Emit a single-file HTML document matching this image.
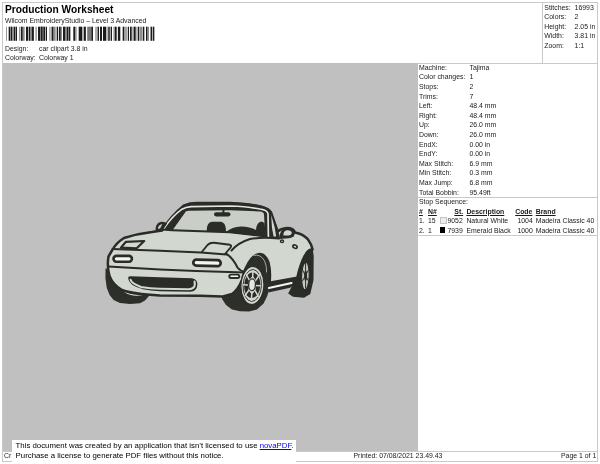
<!DOCTYPE html>
<html><head><meta charset="utf-8">
<style>
html,body{margin:0;padding:0;background:#fff;}
body{width:600px;height:464px;position:relative;overflow:hidden;font-family:"Liberation Sans",sans-serif;font-size:6.9px;color:#1a1a1a;}
.t{position:absolute;white-space:nowrap;line-height:9px;}
.ln{position:absolute;background:#c9c9c9;}
.b{font-weight:bold;}
.u{text-decoration:underline;}
</style></head><body><div id="page" style="position:absolute;left:0;top:0;width:600px;height:464px;will-change:transform">
<!-- frame lines -->
<div class="ln" style="left:2px;top:2px;width:596px;height:1px"></div>
<div class="ln" style="left:2px;top:2px;width:1px;height:460px"></div>
<div class="ln" style="left:597px;top:2px;width:1px;height:460px"></div>
<div class="ln" style="left:2px;top:461px;width:596px;height:1px"></div>
<div class="ln" style="left:542.3px;top:2px;width:1px;height:61px"></div>
<div class="ln" style="left:417px;top:62.5px;width:181px;height:1px"></div>
<div class="ln" style="left:417px;top:197px;width:181px;height:1px"></div>
<div class="ln" style="left:417px;top:235.4px;width:181px;height:1px"></div>
<div class="ln" style="left:2px;top:450.9px;width:596px;height:1px"></div>
<!-- gray area -->
<div id="gray" style="position:absolute;left:3px;top:63px;width:414.5px;height:388px;background:#c0c0c0"></div>

<div class="t b" id="title" style="left:5px;top:4px;font-size:10.2px;line-height:12px;color:#000">Production Worksheet</div>
<div class="t" style="left:5px;top:15.61px">Wilcom EmbroideryStudio – Level 3 Advanced</div>
<div class="t" style="left:5px;top:43.61px">Design:</div>
<div class="t" style="left:39px;top:43.61px">car clipart 3.8 in</div>
<div class="t" style="left:5px;top:52.61px">Colorway:</div>
<div class="t" style="left:39px;top:52.61px">Colorway 1</div>
<div class="t" style="left:544.3px;top:2.61px">Stitches:</div>
<div class="t" style="left:574.6px;top:2.61px">16993</div>
<div class="t" style="left:544.3px;top:11.61px">Colors:</div>
<div class="t" style="left:574.6px;top:11.61px">2</div>
<div class="t" style="left:544.3px;top:21.61px">Height:</div>
<div class="t" style="left:574.6px;top:21.61px">2.05 in</div>
<div class="t" style="left:544.3px;top:30.61px">Width:</div>
<div class="t" style="left:574.6px;top:30.61px">3.81 in</div>
<div class="t" style="left:544.3px;top:40.61px">Zoom:</div>
<div class="t" style="left:574.6px;top:40.61px">1:1</div>
<div class="t" style="left:419px;top:62.61px">Machine:</div>
<div class="t" style="left:469.5px;top:62.61px">Tajima</div>
<div class="t" style="left:419px;top:71.61px">Color changes:</div>
<div class="t" style="left:469.5px;top:71.61px">1</div>
<div class="t" style="left:419px;top:81.61px">Stops:</div>
<div class="t" style="left:469.5px;top:81.61px">2</div>
<div class="t" style="left:419px;top:91.61px">Trims:</div>
<div class="t" style="left:469.5px;top:91.61px">7</div>
<div class="t" style="left:419px;top:100.61px">Left:</div>
<div class="t" style="left:469.5px;top:100.61px">48.4 mm</div>
<div class="t" style="left:419px;top:110.61px">Right:</div>
<div class="t" style="left:469.5px;top:110.61px">48.4 mm</div>
<div class="t" style="left:419px;top:119.61px">Up:</div>
<div class="t" style="left:469.5px;top:119.61px">26.0 mm</div>
<div class="t" style="left:419px;top:129.61px">Down:</div>
<div class="t" style="left:469.5px;top:129.61px">26.0 mm</div>
<div class="t" style="left:419px;top:139.61px">EndX:</div>
<div class="t" style="left:469.5px;top:139.61px">0.00 in</div>
<div class="t" style="left:419px;top:148.61px">EndY:</div>
<div class="t" style="left:469.5px;top:148.61px">0.00 in</div>
<div class="t" style="left:419px;top:158.61px">Max Stitch:</div>
<div class="t" style="left:469.5px;top:158.61px">6.9 mm</div>
<div class="t" style="left:419px;top:167.61px">Min Stitch:</div>
<div class="t" style="left:469.5px;top:167.61px">0.3 mm</div>
<div class="t" style="left:419px;top:177.61px">Max Jump:</div>
<div class="t" style="left:469.5px;top:177.61px">6.8 mm</div>
<div class="t" style="left:419px;top:187.61px">Total Bobbin:</div>
<div class="t" style="left:469.5px;top:187.61px">95.49ft</div>
<div class="t" style="left:419px;top:196.61px">Stop Sequence:</div>
<div class="t b u" style="left:419px;top:206.61px">#</div>
<div class="t b u" style="left:428px;top:206.61px">N#</div>
<div class="t b u" style="left:454.3px;top:206.61px">St.</div>
<div class="t b u" style="left:466.4px;top:206.61px">Description</div>
<div class="t b u" style="left:515.2px;top:206.61px">Code</div>
<div class="t b u" style="left:535.7px;top:206.61px">Brand</div>
<div class="t" style="left:419px;top:215.61px">1.</div>
<div class="t" style="left:428px;top:215.61px">15</div>
<div class="t" style="left:447.4px;top:215.61px">9052</div>
<div class="t" style="left:466.4px;top:215.61px">Natural White</div>
<div class="t" style="left:517.4px;top:215.61px">1004</div>
<div class="t" style="left:535.7px;top:215.61px">Madeira Classic 40</div>
<div style="position:absolute;left:439.5px;top:216.9px;width:5px;height:5px;background:#ededed;border:0.5px solid #c4c4c4"></div>
<div class="t" style="left:419px;top:225.61px">2.</div>
<div class="t" style="left:428px;top:225.61px">1</div>
<div class="t" style="left:447.4px;top:225.61px">7939</div>
<div class="t" style="left:466.4px;top:225.61px">Emerald Black</div>
<div class="t" style="left:517.4px;top:225.61px">1000</div>
<div class="t" style="left:535.7px;top:225.61px">Madeira Classic 40</div>
<div style="position:absolute;left:439.5px;top:226.9px;width:5.8px;height:5.8px;background:#000"></div>
<div class="t" style="left:4px;top:450.61px">Cr</div>
<div class="t" style="left:353.5px;top:450.61px">Printed: 07/08/2021 23.49.43</div>
<div class="t" style="left:561px;top:450.61px">Page 1 of 1</div>
<div id="notice" style="position:absolute;left:11.7px;top:440px;width:284.1px;height:22.5px;background:#fff"></div>
<div class="t" style="left:15.6px;top:441px;font-size:7.82px;line-height:10px;color:#000">This document was created by an application that isn’t licensed to use <span style="color:#0000ee;text-decoration:underline">novaPDF</span>.</div>
<div class="t" style="left:15.6px;top:450.5px;font-size:7.82px;line-height:10px;color:#000">Purchase a license to generate PDF files without this notice.</div>
<svg width="600" height="50" viewBox="0 0 600 50" style="position:absolute;left:0;top:0" fill="#1c1c1c"><rect x="6.00" y="26.7" width="1.00" height="14.1" fill-opacity="0.45"/><rect x="8.67" y="26.7" width="1.67" height="14.1" fill-opacity="1"/><rect x="10.33" y="26.7" width="0.67" height="14.1" fill-opacity="0.4"/><rect x="11.00" y="26.7" width="1.33" height="14.1" fill-opacity="1"/><rect x="12.33" y="26.7" width="1.33" height="14.1" fill-opacity="0.35"/><rect x="13.67" y="26.7" width="1.33" height="14.1" fill-opacity="1"/><rect x="15.00" y="26.7" width="0.67" height="14.1" fill-opacity="0.4"/><rect x="15.67" y="26.7" width="1.33" height="14.1" fill-opacity="1"/><rect x="19.00" y="26.7" width="1.00" height="14.1" fill-opacity="0.45"/><rect x="20.80" y="26.7" width="1.87" height="14.1" fill-opacity="1"/><rect x="22.67" y="26.7" width="2.00" height="14.1" fill-opacity="0.5"/><rect x="26.00" y="26.7" width="2.00" height="14.1" fill-opacity="1"/><rect x="28.00" y="26.7" width="0.80" height="14.1" fill-opacity="0.25"/><rect x="28.80" y="26.7" width="1.33" height="14.1" fill-opacity="1"/><rect x="30.13" y="26.7" width="1.53" height="14.1" fill-opacity="0.5"/><rect x="31.67" y="26.7" width="2.20" height="14.1" fill-opacity="1"/><rect x="35.33" y="26.7" width="1.67" height="14.1" fill-opacity="0.4"/><rect x="38.00" y="26.7" width="2.33" height="14.1" fill-opacity="1"/><rect x="41.00" y="26.7" width="1.33" height="14.1" fill-opacity="1"/><rect x="42.33" y="26.7" width="1.67" height="14.1" fill-opacity="0.45"/><rect x="40.67" y="26.7" width="1.33" height="14.1" fill-opacity="1"/><rect x="42.00" y="26.7" width="1.67" height="14.1" fill-opacity="0.45"/><rect x="43.67" y="26.7" width="1.33" height="14.1" fill-opacity="1"/><rect x="45.67" y="26.7" width="1.33" height="14.1" fill-opacity="1"/><rect x="49.00" y="26.7" width="1.00" height="14.1" fill-opacity="0.35"/><rect x="50.00" y="26.7" width="1.67" height="14.1" fill-opacity="0.25"/><rect x="51.67" y="26.7" width="1.67" height="14.1" fill-opacity="1"/><rect x="53.33" y="26.7" width="2.33" height="14.1" fill-opacity="0.5"/><rect x="56.67" y="26.7" width="1.47" height="14.1" fill-opacity="1"/><rect x="59.00" y="26.7" width="1.00" height="14.1" fill-opacity="1"/><rect x="60.00" y="26.7" width="1.67" height="14.1" fill-opacity="0.75"/><rect x="63.00" y="26.7" width="2.33" height="14.1" fill-opacity="1"/><rect x="65.33" y="26.7" width="1.33" height="14.1" fill-opacity="0.45"/><rect x="66.67" y="26.7" width="1.67" height="14.1" fill-opacity="1"/><rect x="68.67" y="26.7" width="1.67" height="14.1" fill-opacity="1"/><rect x="73.33" y="26.7" width="1.67" height="14.1" fill-opacity="1"/><rect x="75.00" y="26.7" width="1.67" height="14.1" fill-opacity="0.45"/><rect x="78.67" y="26.7" width="1.33" height="14.1" fill-opacity="1"/><rect x="80.00" y="26.7" width="2.00" height="14.1" fill-opacity="1"/><rect x="82.00" y="26.7" width="2.00" height="14.1" fill-opacity="0.35"/><rect x="84.00" y="26.7" width="1.87" height="14.1" fill-opacity="1"/><rect x="87.20" y="26.7" width="4.13" height="14.1" fill-opacity="0.6"/><rect x="91.33" y="26.7" width="1.67" height="14.1" fill-opacity="1"/><rect x="95.00" y="26.7" width="2.67" height="14.1" fill-opacity="0.35"/><rect x="97.67" y="26.7" width="1.33" height="14.1" fill-opacity="1"/><rect x="100.00" y="26.7" width="2.00" height="14.1" fill-opacity="1"/><rect x="103.00" y="26.7" width="3.00" height="14.1" fill-opacity="1"/><rect x="106.00" y="26.7" width="2.00" height="14.1" fill-opacity="0.3"/><rect x="108.00" y="26.7" width="2.00" height="14.1" fill-opacity="0.75"/><rect x="110.00" y="26.7" width="0.80" height="14.1" fill-opacity="0.3"/><rect x="110.80" y="26.7" width="1.20" height="14.1" fill-opacity="1"/><rect x="113.20" y="26.7" width="1.47" height="14.1" fill-opacity="0.35"/><rect x="114.67" y="26.7" width="2.00" height="14.1" fill-opacity="1"/><rect x="117.87" y="26.7" width="2.13" height="14.1" fill-opacity="1"/><rect x="120.00" y="26.7" width="1.00" height="14.1" fill-opacity="0.3"/><rect x="122.67" y="26.7" width="1.47" height="14.1" fill-opacity="1"/><rect x="124.13" y="26.7" width="3.20" height="14.1" fill-opacity="0.4"/><rect x="127.87" y="26.7" width="1.13" height="14.1" fill-opacity="1"/><rect x="130.00" y="26.7" width="1.67" height="14.1" fill-opacity="1"/><rect x="131.67" y="26.7" width="2.00" height="14.1" fill-opacity="0.3"/><rect x="133.67" y="26.7" width="2.00" height="14.1" fill-opacity="1"/><rect x="135.67" y="26.7" width="2.00" height="14.1" fill-opacity="0.3"/><rect x="137.87" y="26.7" width="1.13" height="14.1" fill-opacity="1"/><rect x="139.33" y="26.7" width="2.67" height="14.1" fill-opacity="0.5"/><rect x="142.67" y="26.7" width="1.67" height="14.1" fill-opacity="1"/><rect x="146.00" y="26.7" width="1.33" height="14.1" fill-opacity="1"/><rect x="147.33" y="26.7" width="1.67" height="14.1" fill-opacity="0.5"/><rect x="150.53" y="26.7" width="1.47" height="14.1" fill-opacity="1"/><rect x="152.67" y="26.7" width="1.67" height="14.1" fill-opacity="1"/></svg>
<svg id="car" width="600" height="464" viewBox="0 0 600 464" style="position:absolute;left:0;top:0">
<g stroke-linejoin="round" stroke-linecap="round">
<!-- left front tire -->
<path d="M105.6,268 L105.4,278 L106.8,288 L109.6,295 L113.6,300 L120,303 L130,303.9 L140,303.3 L145,300.4 L149.4,295.6 L153,293.2 L130,288 Z" fill="#2d2f2b"/>
<path d="M125.2,292 Q131,296 141.8,294.6" fill="none" stroke="#dfe3dc" stroke-width="1.4"/>
<!-- rear wheel tire -->
<path d="M303,249 L312.4,246.5 L313.7,256 L313.5,280 L310.3,294 L304,297.8 L293,296.8 L288.2,293.6 L296,278 Z" fill="#2a2c28"/>
<!-- front right tire -->
<path d="M246,262 L258,251.5 L267,257.5 L270.8,274 L269.6,288 L267.2,296 L263.6,303.6 L257,309.4 L249,311.4 L240,311.2 L232,309.4 L226,305 L222.4,299.5 L221.4,296 L222,293 L240,285 Z" fill="#2d2f2b"/>
<!-- body -->
<path id="body" d="M112,250.5 Q116,243 124,238 Q138,233.6 152,232 L162,230.5
 Q171,216 184,205.6 Q189,203.1 196,203 L230,202.9 Q250,203.8 262,206.9 Q269,208.8 271,212.6 L277.6,231.5
 Q281,228.4 287,228 Q293.5,228 295,232.4 Q303,233.8 308,239.4 Q311.8,244.5 312.6,249.5
 Q308,248.6 304.6,256.2 Q300.4,264.2 297.3,277.8 L269.5,282.8
 Q270.8,272 268.6,263 Q265.4,254 259.5,254 Q252,255 247,266 Q244,271 242,280 Q238,290 232,294 L222,296.6
 L200,295.8 L160,295.4 Q132,294 122,290 Q113,285.2 109.5,276 Q106.8,266 108.5,256.5 Z"
 fill="#d2d7cf" stroke="#2a2c28" stroke-width="2.5"/>
<!-- wheel arch highlight -->
<path d="M254,255.5 Q260.4,253.5 264.6,261 Q267,266 266.6,272" fill="none" stroke="#d2d7cf" stroke-width="0.7"/>
<!-- sill -->
<path d="M269.3,282.5 L297.3,277.5 L296,283.6 L290,287.8 L268.3,292.6 Z" fill="#2a2c28"/>
<path d="M268.8,288 L291.6,283" stroke="#f6f8f4" stroke-width="1.9" fill="none"/>
<!-- windshield frame (dark) -->
<path d="M161.6,230.6 Q171,215.4 183.5,204.8 Q189,202.2 196,202.1 L230,201.9 Q250,202.8 262.5,206 Q270,208 272,212.2 L278.6,231.5 L279.6,238.5 L266.5,237.4 L230,233.3 L172,231.3 Z" fill="#2a2c28"/>
<!-- glass -->
<path d="M173.2,229.2 L186,211.2 Q187,210.8 189,210.8 L230,210.3 L260,211.4 Q263.8,211.6 264,214.6 L265.2,235.6 L230,231.2 Z" fill="#c9cec6"/>
<!-- frame light line -->
<path d="M164.2,228 Q173,215.5 181.4,209.6 Q186,206.9 191,206.6 L230,206 Q248,206.7 260,209 Q267.6,210.2 268,214 L268.4,236.4" fill="none" stroke="#e2e6df" stroke-width="1.7"/>
<!-- quarter window triangle -->
<path d="M271.2,215 L274.6,227 L276.2,236.6 L273.6,236.4 L272,228 Z" fill="#d2d7cf"/>
<!-- rear view mirror -->
<rect x="214" y="212.2" width="16.5" height="4.2" rx="2.1" fill="#2a2c28"/>
<path d="M223.4,209.5 L223.4,212.5" stroke="#2a2c28" stroke-width="2"/>
<!-- headrests / seats -->
<path d="M206.6,231.5 Q206.5,222.5 212,221.8 L221,221.8 Q226,222.5 226,231.8 Z" fill="#2a2c28"/>
<path d="M226,232 Q232,226.8 241,226.4 Q250,226.6 256,230 Q256.5,222.5 261.5,221.6 L264.6,223 L266,237 L230,232.8 Z" fill="#2a2c28"/>
<!-- left mirror -->
<path d="M155.6,231.2 Q155,224 160,222 Q164.4,221.2 167.2,223.4 L162,231.2 Z" fill="#2a2c28"/>
<path d="M158.3,228.2 Q158.4,225.3 161.8,224.4 L160,228 Z" fill="#d2d7cf" stroke="#d2d7cf" stroke-width="0.6"/>
<!-- right mirror -->
<path d="M279.2,239 Q279.2,229.4 286,228 Q293.5,227.4 295,232 Q295.4,237.4 289,238.2 Z" fill="#2a2c28"/>
<path d="M283.4,235.6 Q283,230.8 287,230.2 Q291.4,230 291.8,232.8 Q291.8,235.2 288,235.6 Z" fill="#d2d7cf"/>
<!-- lock and handle -->
<ellipse cx="282" cy="241.2" rx="1.5" ry="1.3" fill="#f4f6f2" stroke="#2a2c28" stroke-width="1.5"/>
<ellipse cx="295" cy="246.6" rx="2.2" ry="1.5" fill="#f4f6f2" stroke="#2a2c28" stroke-width="1.7" transform="rotate(25 295 246.6)"/>
<!-- door/fender curve -->
<path d="M279,238.6 Q262,236.8 250,239 Q238,242.8 231.5,250.5" fill="none" stroke="#2a2c28" stroke-width="2"/>
<!-- fender line to wheel -->
<path d="M226.5,253.8 Q233,258 237.5,267.5 Q240,271 245,271.8" fill="none" stroke="#2a2c28" stroke-width="2"/>
<!-- hood seam -->
<path d="M112.5,249 L160,250.8 L201,252.6 L226.5,254.6" fill="none" stroke="#2a2c28" stroke-width="2"/>
<!-- bumper line -->
<path d="M108.3,266.6 L160,269.4 L196,271 L245,272.4" fill="none" stroke="#2a2c28" stroke-width="2"/>
<!-- popup lamps -->
<path d="M120.9,247.7 L125.9,241.8 L144.2,241 L136.7,248.3 Z" fill="#d2d7cf" stroke="#2a2c28" stroke-width="2.2"/>
<path d="M201.8,252 L207.5,245 Q210,242.6 214,242.8 L230,244.8 Q232,245.4 230.5,247.5 L225,254" fill="none" stroke="#2a2c28" stroke-width="1.9"/>
<!-- indicators -->
<rect x="113.5" y="255.9" width="18.4" height="5.8" rx="2.9" fill="#f4f6f2" stroke="#2a2c28" stroke-width="2.6"/>
<rect x="193.3" y="259.8" width="27.4" height="6" rx="3" fill="#f4f6f2" stroke="#2a2c28" stroke-width="2.7" transform="rotate(1.5 206 262)"/>
<!-- side marker -->
<rect x="229.3" y="274.6" width="10" height="3.4" rx="1.7" fill="#f6f8f4" stroke="#2a2c28" stroke-width="1.9"/>
<!-- mouth -->
<path d="M128.2,277.6 Q128.4,276.2 131,276.3 L160,277.3 L192,278.3 Q197.4,279 197.4,284.5 Q197,291.4 190,291.8 L160,291.2 Q140,290.4 132.2,284.8 Q128,281 128.2,277.6 Z" fill="#2a2c28"/>
<path d="M130.6,279.8 Q131.6,283.6 141,287 Q150,288.6 160,288.8 L189,289.2 Q194.6,288.8 194.8,284.5 L194.6,281.5" fill="none" stroke="#d2d7cf" stroke-width="2.1"/>
<!-- front right rim -->
<g transform="rotate(3 252.4 285.5)">
<ellipse cx="252.4" cy="285.5" rx="11.5" ry="19" fill="#d2d7cf" stroke="#2a2c28" stroke-width="1.2"/>
<ellipse cx="252.3" cy="285.5" rx="9.2" ry="16" fill="none" stroke="#2a2c28" stroke-width="0.9"/>
<ellipse cx="252.2" cy="285.3" rx="6" ry="10.6" fill="none" stroke="#2a2c28" stroke-width="4.2"/>
<g stroke="#d2d7cf" stroke-width="1.5">
<path d="M252.2,271 L252.2,300 M243.6,285.3 L260.8,285.3 M245.6,274.6 L258.8,296 M258.8,274.6 L245.6,296"/>
</g>
<ellipse cx="252" cy="284.8" rx="3.4" ry="5.9" fill="#e3e7e0" stroke="#2a2c28" stroke-width="1.3"/>
</g>
<!-- rear rim -->
<ellipse cx="305.4" cy="276" rx="3.8" ry="13.8" fill="#c3c8c0" stroke="#2a2c28" stroke-width="1.1" transform="rotate(2 305.6 275.7)"/>
<ellipse cx="305.6" cy="275.7" rx="1.5" ry="5" fill="#2a2c28"/>
<path d="M305.6,263 L305.6,288 M302.5,270 L308.5,281 M302.5,281 L308.5,270" stroke="#2a2c28" stroke-width="1"/>
</g>
</svg>

</div></body></html>
